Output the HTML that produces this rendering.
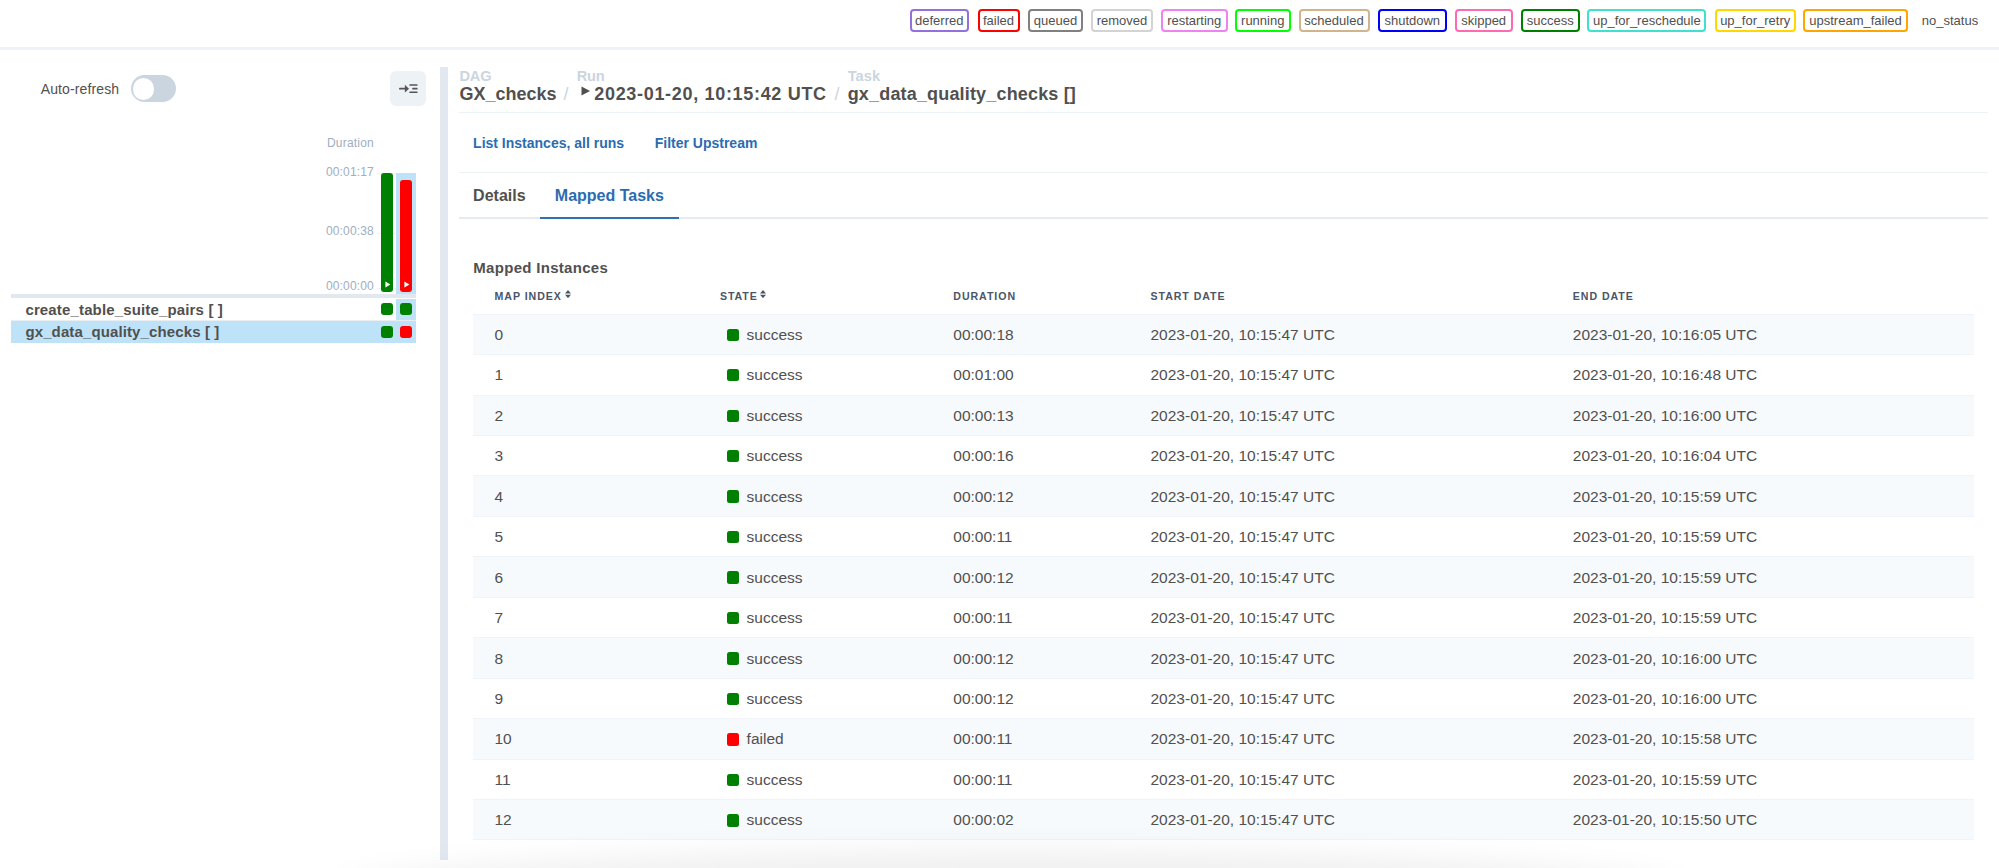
<!DOCTYPE html>
<html><head><meta charset="utf-8"><title>Grid</title>
<style>
html,body{margin:0;padding:0;}
body{width:1999px;height:868px;overflow:hidden;position:relative;background:#fff;font-family:"Liberation Sans", sans-serif;}
.t{position:absolute;line-height:1;white-space:nowrap;}
.r{position:absolute;}
.lg{position:absolute;top:9px;height:23px;box-sizing:border-box;border:2px solid;border-radius:4px;font-size:13px;line-height:19px;color:#51504f;text-align:center;white-space:nowrap;}
</style></head><body>
<div class="lg" style="left:909.5px;width:59.5px;border-color:#9370db">deferred</div>
<div class="lg" style="left:977.5px;width:42.0px;border-color:red">failed</div>
<div class="lg" style="left:1028.0px;width:55.0px;border-color:gray">queued</div>
<div class="lg" style="left:1091.0px;width:62.0px;border-color:lightgrey">removed</div>
<div class="lg" style="left:1161.0px;width:66.5px;border-color:violet">restarting</div>
<div class="lg" style="left:1235.0px;width:55.5px;border-color:lime">running</div>
<div class="lg" style="left:1298.5px;width:71.0px;border-color:tan">scheduled</div>
<div class="lg" style="left:1377.5px;width:69.5px;border-color:blue">shutdown</div>
<div class="lg" style="left:1454.7px;width:58.0px;border-color:hotpink">skipped</div>
<div class="lg" style="left:1520.8px;width:58.8px;border-color:green">success</div>
<div class="lg" style="left:1587.3px;width:119.2px;border-color:turquoise">up_for_reschedule</div>
<div class="lg" style="left:1714.7px;width:81.0px;border-color:gold">up_for_retry</div>
<div class="lg" style="left:1803.2px;width:104.7px;border-color:orange">upstream_failed</div>
<div class="lg" style="left:1918px;width:64px;border-color:transparent">no_status</div>
<div class="r" style="left:0.00px;top:47.00px;width:1999.00px;height:3.00px;background:#eef2f7;"></div>
<div class="t" style="left:40.70px;top:81.85px;font-size:14px;font-weight:400;color:#51504f;letter-spacing:0.13px;">Auto-refresh</div>
<div class="r" style="left:130.6px;top:75.2px;width:45.8px;height:26.5px;border-radius:14px;background:#cbd5e0"></div>
<div class="r" style="left:132.6px;top:78px;width:21.6px;height:21.6px;border-radius:50%;background:#fff"></div>
<div class="r" style="left:390.4px;top:70.8px;width:35.6px;height:35.3px;border-radius:6px;background:#edf2f7"></div>
<svg class="r" style="left:394px;top:78px" width="30" height="22" viewBox="394 78 30 22">
<path d="M399.9 88.65 H405.5" stroke="#555" stroke-width="1.8" stroke-linecap="round"/>
<path d="M404.9 84.8 L409 88.7 L404.9 92.6 Z" fill="#555"/>
<path d="M410.1 85 H416.8 M413 88.7 H416.8 M410.1 92.25 H416.8" stroke="#555" stroke-width="1.7" stroke-linecap="round"/>
</svg>
<div class="t" style="left:327.00px;top:137.14px;font-size:12px;font-weight:400;color:#a0aec0;letter-spacing:0.2px;">Duration</div>
<div class="t" style="left:300px;width:73.9px;text-align:right;top:165.84px;font-size:12px;color:#a0aec0;letter-spacing:0.15px">00:01:17</div>
<div class="t" style="left:300px;width:73.9px;text-align:right;top:224.84px;font-size:12px;color:#a0aec0;letter-spacing:0.15px">00:00:38</div>
<div class="t" style="left:300px;width:73.9px;text-align:right;top:279.64px;font-size:12px;color:#a0aec0;letter-spacing:0.15px">00:00:00</div>
<div class="r" style="left:377.00px;top:172.50px;width:39.00px;height:1.00px;background:#edf2f7;"></div>
<div class="r" style="left:377.00px;top:232.90px;width:39.00px;height:1.00px;background:#edf2f7;"></div>
<div class="r" style="left:377.00px;top:288.00px;width:39.00px;height:1.00px;background:#edf2f7;"></div>
<div class="r" style="left:396.00px;top:172.60px;width:20.00px;height:121.40px;background:#bee3f8;"></div>
<div class="r" style="left:396.00px;top:298.60px;width:20.00px;height:21.40px;background:#bee3f8;"></div>
<div class="r" style="left:11.00px;top:320.00px;width:405.00px;height:1.00px;background:#e9eef3;"></div>
<div class="r" style="left:381px;top:172.6px;width:12px;height:119.4px;border-radius:3px;background:green"></div>
<div class="r" style="left:400px;top:180.3px;width:12px;height:111.7px;border-radius:3px;background:red"></div>
<svg class="r" style="left:384.6px;top:280.9px" width="6" height="7" viewBox="0 0 6 7"><path d="M0.4 0.5 L5.4 3.45 L0.4 6.4 Z" fill="#fff"/></svg>
<svg class="r" style="left:403.6px;top:280.9px" width="6" height="7" viewBox="0 0 6 7"><path d="M0.4 0.5 L5.4 3.45 L0.4 6.4 Z" fill="#fff"/></svg>
<div class="r" style="left:11.00px;top:294.00px;width:405.00px;height:4.40px;background:#e2e8f0;"></div>
<div class="r" style="left:11.00px;top:320.90px;width:405.00px;height:21.90px;background:#bee3f8;"></div>
<div class="t" style="left:25.40px;top:301.90px;font-size:15px;font-weight:700;color:#51504f;letter-spacing:0.15px;">create_table_suite_pairs [ ]</div>
<div class="t" style="left:25.40px;top:323.50px;font-size:15px;font-weight:700;color:#51504f;letter-spacing:0.12px;">gx_data_quality_checks [ ]</div>
<div class="r" style="left:381px;top:303.2px;width:12px;height:12px;border-radius:3px;background:green"></div>
<div class="r" style="left:381px;top:325.9px;width:12px;height:12px;border-radius:3px;background:green"></div>
<div class="r" style="left:400px;top:303.2px;width:12px;height:12px;border-radius:3px;background:green"></div>
<div class="r" style="left:400px;top:325.9px;width:12px;height:12px;border-radius:3px;background:red"></div>
<div class="r" style="left:440.20px;top:67.10px;width:7.60px;height:792.90px;background:#e2e8f0;"></div>
<div class="t" style="left:459.50px;top:69.14px;font-size:14.6px;font-weight:700;color:#cbd5e0;letter-spacing:-0.2px;">DAG</div>
<div class="t" style="left:459.50px;top:84.86px;font-size:18px;font-weight:700;color:#51504f;letter-spacing:0px;">GX_checks</div>
<div class="t" style="left:563.50px;top:84.86px;font-size:18px;font-weight:400;color:#cbd5e0;letter-spacing:0px;">/</div>
<div class="t" style="left:576.70px;top:69.14px;font-size:14.6px;font-weight:700;color:#cbd5e0;letter-spacing:-0.2px;">Run</div>
<svg class="r" style="left:581px;top:86px" width="10" height="10" viewBox="0 0 10 10"><path d="M0.5 0.5 L9 5 L0.5 9.5 Z" fill="#51504f"/></svg>
<div class="t" style="left:594.30px;top:84.86px;font-size:18px;font-weight:700;color:#51504f;letter-spacing:0.68px;">2023-01-20, 10:15:42 UTC</div>
<div class="t" style="left:834.50px;top:84.86px;font-size:18px;font-weight:400;color:#cbd5e0;letter-spacing:0px;">/</div>
<div class="t" style="left:847.70px;top:69.14px;font-size:14.6px;font-weight:700;color:#cbd5e0;letter-spacing:0.1px;">Task</div>
<div class="t" style="left:847.70px;top:84.86px;font-size:18px;font-weight:700;color:#51504f;letter-spacing:0.17px;">gx_data_quality_checks []</div>
<div class="r" style="left:458.70px;top:112.00px;width:1529.30px;height:1.00px;background:#edf2f7;"></div>
<div class="t" style="left:473.10px;top:136.05px;font-size:14px;font-weight:700;color:#2b6cb0;letter-spacing:0px;">List Instances, all runs</div>
<div class="t" style="left:654.70px;top:136.05px;font-size:14px;font-weight:700;color:#2b6cb0;letter-spacing:0px;">Filter Upstream</div>
<div class="r" style="left:458.70px;top:171.60px;width:1529.30px;height:1.00px;background:#edf2f7;"></div>
<div class="t" style="left:473.10px;top:187.56px;font-size:16px;font-weight:700;color:#51504f;letter-spacing:0px;">Details</div>
<div class="t" style="left:554.80px;top:187.56px;font-size:16px;font-weight:700;color:#2b6cb0;letter-spacing:0px;">Mapped Tasks</div>
<div class="r" style="left:458.70px;top:216.80px;width:1529.30px;height:2.00px;background:#e6ebf1;"></div>
<div class="r" style="left:540.00px;top:216.60px;width:139.00px;height:2.40px;background:#3070b5;"></div>
<div class="t" style="left:473.30px;top:259.80px;font-size:15px;font-weight:700;color:#51504f;letter-spacing:0.3px;">Mapped Instances</div>
<div class="t" style="left:494.60px;top:290.73px;font-size:10.6px;font-weight:700;color:#4a5568;letter-spacing:0.95px;">MAP INDEX</div>
<div class="t" style="left:719.90px;top:290.73px;font-size:10.6px;font-weight:700;color:#4a5568;letter-spacing:0.95px;">STATE</div>
<div class="t" style="left:953.30px;top:290.73px;font-size:10.6px;font-weight:700;color:#4a5568;letter-spacing:0.95px;">DURATION</div>
<div class="t" style="left:1150.50px;top:290.73px;font-size:10.6px;font-weight:700;color:#4a5568;letter-spacing:0.95px;">START DATE</div>
<div class="t" style="left:1572.80px;top:290.73px;font-size:10.6px;font-weight:700;color:#4a5568;letter-spacing:0.95px;">END DATE</div>
<svg class="r" style="left:565.1px;top:290px" width="6" height="8.2" viewBox="0 0 6 8.2"><path d="M3 0 L6 3.6 L0 3.6 Z M0 4.7 L6 4.7 L3 8.2 Z" fill="#4a5568"/></svg>
<svg class="r" style="left:760.2px;top:290px" width="6" height="8.2" viewBox="0 0 6 8.2"><path d="M3 0 L6 3.6 L0 3.6 Z M0 4.7 L6 4.7 L3 8.2 Z" fill="#4a5568"/></svg>
<div class="r" style="left:472.80px;top:313.60px;width:1501.20px;height:40.46px;background:#f7fafc;"></div>
<div class="r" style="left:472.80px;top:313.60px;width:1501.20px;height:1.00px;background:#f0f3f7;"></div>
<div class="t" style="left:494.50px;top:326.88px;font-size:15.5px;font-weight:400;color:#51504f;letter-spacing:0px;">0</div>
<div class="r" style="left:726.7px;top:328.60px;width:12.3px;height:12.4px;border-radius:2.5px;background:green"></div>
<div class="t" style="left:746.60px;top:326.88px;font-size:15.5px;font-weight:400;color:#51504f;letter-spacing:0px;">success</div>
<div class="t" style="left:953.30px;top:326.88px;font-size:15.5px;font-weight:400;color:#51504f;letter-spacing:0px;">00:00:18</div>
<div class="t" style="left:1150.50px;top:326.88px;font-size:15.5px;font-weight:400;color:#51504f;letter-spacing:0px;">2023-01-20, 10:15:47 UTC</div>
<div class="t" style="left:1572.80px;top:326.88px;font-size:15.5px;font-weight:400;color:#51504f;letter-spacing:0px;">2023-01-20, 10:16:05 UTC</div>
<div class="r" style="left:472.80px;top:354.06px;width:1501.20px;height:1.00px;background:#f0f3f7;"></div>
<div class="t" style="left:494.50px;top:367.34px;font-size:15.5px;font-weight:400;color:#51504f;letter-spacing:0px;">1</div>
<div class="r" style="left:726.7px;top:369.06px;width:12.3px;height:12.4px;border-radius:2.5px;background:green"></div>
<div class="t" style="left:746.60px;top:367.34px;font-size:15.5px;font-weight:400;color:#51504f;letter-spacing:0px;">success</div>
<div class="t" style="left:953.30px;top:367.34px;font-size:15.5px;font-weight:400;color:#51504f;letter-spacing:0px;">00:01:00</div>
<div class="t" style="left:1150.50px;top:367.34px;font-size:15.5px;font-weight:400;color:#51504f;letter-spacing:0px;">2023-01-20, 10:15:47 UTC</div>
<div class="t" style="left:1572.80px;top:367.34px;font-size:15.5px;font-weight:400;color:#51504f;letter-spacing:0px;">2023-01-20, 10:16:48 UTC</div>
<div class="r" style="left:472.80px;top:394.52px;width:1501.20px;height:40.46px;background:#f7fafc;"></div>
<div class="r" style="left:472.80px;top:394.52px;width:1501.20px;height:1.00px;background:#f0f3f7;"></div>
<div class="t" style="left:494.50px;top:407.80px;font-size:15.5px;font-weight:400;color:#51504f;letter-spacing:0px;">2</div>
<div class="r" style="left:726.7px;top:409.52px;width:12.3px;height:12.4px;border-radius:2.5px;background:green"></div>
<div class="t" style="left:746.60px;top:407.80px;font-size:15.5px;font-weight:400;color:#51504f;letter-spacing:0px;">success</div>
<div class="t" style="left:953.30px;top:407.80px;font-size:15.5px;font-weight:400;color:#51504f;letter-spacing:0px;">00:00:13</div>
<div class="t" style="left:1150.50px;top:407.80px;font-size:15.5px;font-weight:400;color:#51504f;letter-spacing:0px;">2023-01-20, 10:15:47 UTC</div>
<div class="t" style="left:1572.80px;top:407.80px;font-size:15.5px;font-weight:400;color:#51504f;letter-spacing:0px;">2023-01-20, 10:16:00 UTC</div>
<div class="r" style="left:472.80px;top:434.98px;width:1501.20px;height:1.00px;background:#f0f3f7;"></div>
<div class="t" style="left:494.50px;top:448.26px;font-size:15.5px;font-weight:400;color:#51504f;letter-spacing:0px;">3</div>
<div class="r" style="left:726.7px;top:449.98px;width:12.3px;height:12.4px;border-radius:2.5px;background:green"></div>
<div class="t" style="left:746.60px;top:448.26px;font-size:15.5px;font-weight:400;color:#51504f;letter-spacing:0px;">success</div>
<div class="t" style="left:953.30px;top:448.26px;font-size:15.5px;font-weight:400;color:#51504f;letter-spacing:0px;">00:00:16</div>
<div class="t" style="left:1150.50px;top:448.26px;font-size:15.5px;font-weight:400;color:#51504f;letter-spacing:0px;">2023-01-20, 10:15:47 UTC</div>
<div class="t" style="left:1572.80px;top:448.26px;font-size:15.5px;font-weight:400;color:#51504f;letter-spacing:0px;">2023-01-20, 10:16:04 UTC</div>
<div class="r" style="left:472.80px;top:475.44px;width:1501.20px;height:40.46px;background:#f7fafc;"></div>
<div class="r" style="left:472.80px;top:475.44px;width:1501.20px;height:1.00px;background:#f0f3f7;"></div>
<div class="t" style="left:494.50px;top:488.72px;font-size:15.5px;font-weight:400;color:#51504f;letter-spacing:0px;">4</div>
<div class="r" style="left:726.7px;top:490.44px;width:12.3px;height:12.4px;border-radius:2.5px;background:green"></div>
<div class="t" style="left:746.60px;top:488.72px;font-size:15.5px;font-weight:400;color:#51504f;letter-spacing:0px;">success</div>
<div class="t" style="left:953.30px;top:488.72px;font-size:15.5px;font-weight:400;color:#51504f;letter-spacing:0px;">00:00:12</div>
<div class="t" style="left:1150.50px;top:488.72px;font-size:15.5px;font-weight:400;color:#51504f;letter-spacing:0px;">2023-01-20, 10:15:47 UTC</div>
<div class="t" style="left:1572.80px;top:488.72px;font-size:15.5px;font-weight:400;color:#51504f;letter-spacing:0px;">2023-01-20, 10:15:59 UTC</div>
<div class="r" style="left:472.80px;top:515.90px;width:1501.20px;height:1.00px;background:#f0f3f7;"></div>
<div class="t" style="left:494.50px;top:529.18px;font-size:15.5px;font-weight:400;color:#51504f;letter-spacing:0px;">5</div>
<div class="r" style="left:726.7px;top:530.90px;width:12.3px;height:12.4px;border-radius:2.5px;background:green"></div>
<div class="t" style="left:746.60px;top:529.18px;font-size:15.5px;font-weight:400;color:#51504f;letter-spacing:0px;">success</div>
<div class="t" style="left:953.30px;top:529.18px;font-size:15.5px;font-weight:400;color:#51504f;letter-spacing:0px;">00:00:11</div>
<div class="t" style="left:1150.50px;top:529.18px;font-size:15.5px;font-weight:400;color:#51504f;letter-spacing:0px;">2023-01-20, 10:15:47 UTC</div>
<div class="t" style="left:1572.80px;top:529.18px;font-size:15.5px;font-weight:400;color:#51504f;letter-spacing:0px;">2023-01-20, 10:15:59 UTC</div>
<div class="r" style="left:472.80px;top:556.36px;width:1501.20px;height:40.46px;background:#f7fafc;"></div>
<div class="r" style="left:472.80px;top:556.36px;width:1501.20px;height:1.00px;background:#f0f3f7;"></div>
<div class="t" style="left:494.50px;top:569.64px;font-size:15.5px;font-weight:400;color:#51504f;letter-spacing:0px;">6</div>
<div class="r" style="left:726.7px;top:571.36px;width:12.3px;height:12.4px;border-radius:2.5px;background:green"></div>
<div class="t" style="left:746.60px;top:569.64px;font-size:15.5px;font-weight:400;color:#51504f;letter-spacing:0px;">success</div>
<div class="t" style="left:953.30px;top:569.64px;font-size:15.5px;font-weight:400;color:#51504f;letter-spacing:0px;">00:00:12</div>
<div class="t" style="left:1150.50px;top:569.64px;font-size:15.5px;font-weight:400;color:#51504f;letter-spacing:0px;">2023-01-20, 10:15:47 UTC</div>
<div class="t" style="left:1572.80px;top:569.64px;font-size:15.5px;font-weight:400;color:#51504f;letter-spacing:0px;">2023-01-20, 10:15:59 UTC</div>
<div class="r" style="left:472.80px;top:596.82px;width:1501.20px;height:1.00px;background:#f0f3f7;"></div>
<div class="t" style="left:494.50px;top:610.10px;font-size:15.5px;font-weight:400;color:#51504f;letter-spacing:0px;">7</div>
<div class="r" style="left:726.7px;top:611.82px;width:12.3px;height:12.4px;border-radius:2.5px;background:green"></div>
<div class="t" style="left:746.60px;top:610.10px;font-size:15.5px;font-weight:400;color:#51504f;letter-spacing:0px;">success</div>
<div class="t" style="left:953.30px;top:610.10px;font-size:15.5px;font-weight:400;color:#51504f;letter-spacing:0px;">00:00:11</div>
<div class="t" style="left:1150.50px;top:610.10px;font-size:15.5px;font-weight:400;color:#51504f;letter-spacing:0px;">2023-01-20, 10:15:47 UTC</div>
<div class="t" style="left:1572.80px;top:610.10px;font-size:15.5px;font-weight:400;color:#51504f;letter-spacing:0px;">2023-01-20, 10:15:59 UTC</div>
<div class="r" style="left:472.80px;top:637.28px;width:1501.20px;height:40.46px;background:#f7fafc;"></div>
<div class="r" style="left:472.80px;top:637.28px;width:1501.20px;height:1.00px;background:#f0f3f7;"></div>
<div class="t" style="left:494.50px;top:650.56px;font-size:15.5px;font-weight:400;color:#51504f;letter-spacing:0px;">8</div>
<div class="r" style="left:726.7px;top:652.28px;width:12.3px;height:12.4px;border-radius:2.5px;background:green"></div>
<div class="t" style="left:746.60px;top:650.56px;font-size:15.5px;font-weight:400;color:#51504f;letter-spacing:0px;">success</div>
<div class="t" style="left:953.30px;top:650.56px;font-size:15.5px;font-weight:400;color:#51504f;letter-spacing:0px;">00:00:12</div>
<div class="t" style="left:1150.50px;top:650.56px;font-size:15.5px;font-weight:400;color:#51504f;letter-spacing:0px;">2023-01-20, 10:15:47 UTC</div>
<div class="t" style="left:1572.80px;top:650.56px;font-size:15.5px;font-weight:400;color:#51504f;letter-spacing:0px;">2023-01-20, 10:16:00 UTC</div>
<div class="r" style="left:472.80px;top:677.74px;width:1501.20px;height:1.00px;background:#f0f3f7;"></div>
<div class="t" style="left:494.50px;top:691.02px;font-size:15.5px;font-weight:400;color:#51504f;letter-spacing:0px;">9</div>
<div class="r" style="left:726.7px;top:692.74px;width:12.3px;height:12.4px;border-radius:2.5px;background:green"></div>
<div class="t" style="left:746.60px;top:691.02px;font-size:15.5px;font-weight:400;color:#51504f;letter-spacing:0px;">success</div>
<div class="t" style="left:953.30px;top:691.02px;font-size:15.5px;font-weight:400;color:#51504f;letter-spacing:0px;">00:00:12</div>
<div class="t" style="left:1150.50px;top:691.02px;font-size:15.5px;font-weight:400;color:#51504f;letter-spacing:0px;">2023-01-20, 10:15:47 UTC</div>
<div class="t" style="left:1572.80px;top:691.02px;font-size:15.5px;font-weight:400;color:#51504f;letter-spacing:0px;">2023-01-20, 10:16:00 UTC</div>
<div class="r" style="left:472.80px;top:718.20px;width:1501.20px;height:40.46px;background:#f7fafc;"></div>
<div class="r" style="left:472.80px;top:718.20px;width:1501.20px;height:1.00px;background:#f0f3f7;"></div>
<div class="t" style="left:494.50px;top:731.48px;font-size:15.5px;font-weight:400;color:#51504f;letter-spacing:0px;">10</div>
<div class="r" style="left:726.7px;top:733.20px;width:12.3px;height:12.4px;border-radius:2.5px;background:red"></div>
<div class="t" style="left:746.60px;top:731.48px;font-size:15.5px;font-weight:400;color:#51504f;letter-spacing:0px;">failed</div>
<div class="t" style="left:953.30px;top:731.48px;font-size:15.5px;font-weight:400;color:#51504f;letter-spacing:0px;">00:00:11</div>
<div class="t" style="left:1150.50px;top:731.48px;font-size:15.5px;font-weight:400;color:#51504f;letter-spacing:0px;">2023-01-20, 10:15:47 UTC</div>
<div class="t" style="left:1572.80px;top:731.48px;font-size:15.5px;font-weight:400;color:#51504f;letter-spacing:0px;">2023-01-20, 10:15:58 UTC</div>
<div class="r" style="left:472.80px;top:758.66px;width:1501.20px;height:1.00px;background:#f0f3f7;"></div>
<div class="t" style="left:494.50px;top:771.94px;font-size:15.5px;font-weight:400;color:#51504f;letter-spacing:0px;">11</div>
<div class="r" style="left:726.7px;top:773.66px;width:12.3px;height:12.4px;border-radius:2.5px;background:green"></div>
<div class="t" style="left:746.60px;top:771.94px;font-size:15.5px;font-weight:400;color:#51504f;letter-spacing:0px;">success</div>
<div class="t" style="left:953.30px;top:771.94px;font-size:15.5px;font-weight:400;color:#51504f;letter-spacing:0px;">00:00:11</div>
<div class="t" style="left:1150.50px;top:771.94px;font-size:15.5px;font-weight:400;color:#51504f;letter-spacing:0px;">2023-01-20, 10:15:47 UTC</div>
<div class="t" style="left:1572.80px;top:771.94px;font-size:15.5px;font-weight:400;color:#51504f;letter-spacing:0px;">2023-01-20, 10:15:59 UTC</div>
<div class="r" style="left:472.80px;top:799.12px;width:1501.20px;height:40.46px;background:#f7fafc;"></div>
<div class="r" style="left:472.80px;top:799.12px;width:1501.20px;height:1.00px;background:#f0f3f7;"></div>
<div class="t" style="left:494.50px;top:812.40px;font-size:15.5px;font-weight:400;color:#51504f;letter-spacing:0px;">12</div>
<div class="r" style="left:726.7px;top:814.12px;width:12.3px;height:12.4px;border-radius:2.5px;background:green"></div>
<div class="t" style="left:746.60px;top:812.40px;font-size:15.5px;font-weight:400;color:#51504f;letter-spacing:0px;">success</div>
<div class="t" style="left:953.30px;top:812.40px;font-size:15.5px;font-weight:400;color:#51504f;letter-spacing:0px;">00:00:02</div>
<div class="t" style="left:1150.50px;top:812.40px;font-size:15.5px;font-weight:400;color:#51504f;letter-spacing:0px;">2023-01-20, 10:15:47 UTC</div>
<div class="t" style="left:1572.80px;top:812.40px;font-size:15.5px;font-weight:400;color:#51504f;letter-spacing:0px;">2023-01-20, 10:15:50 UTC</div>
<div class="r" style="left:472.80px;top:839.08px;width:1501.20px;height:1.00px;background:#f0f3f7;"></div>
<div class="r" style="left:0;top:800px;width:1999px;height:68px;overflow:hidden"><div style="position:absolute;left:340px;top:50px;width:1340px;height:84px;border-radius:50%;background:rgba(0,0,0,0.06);filter:blur(14px)"></div></div>
</body></html>
